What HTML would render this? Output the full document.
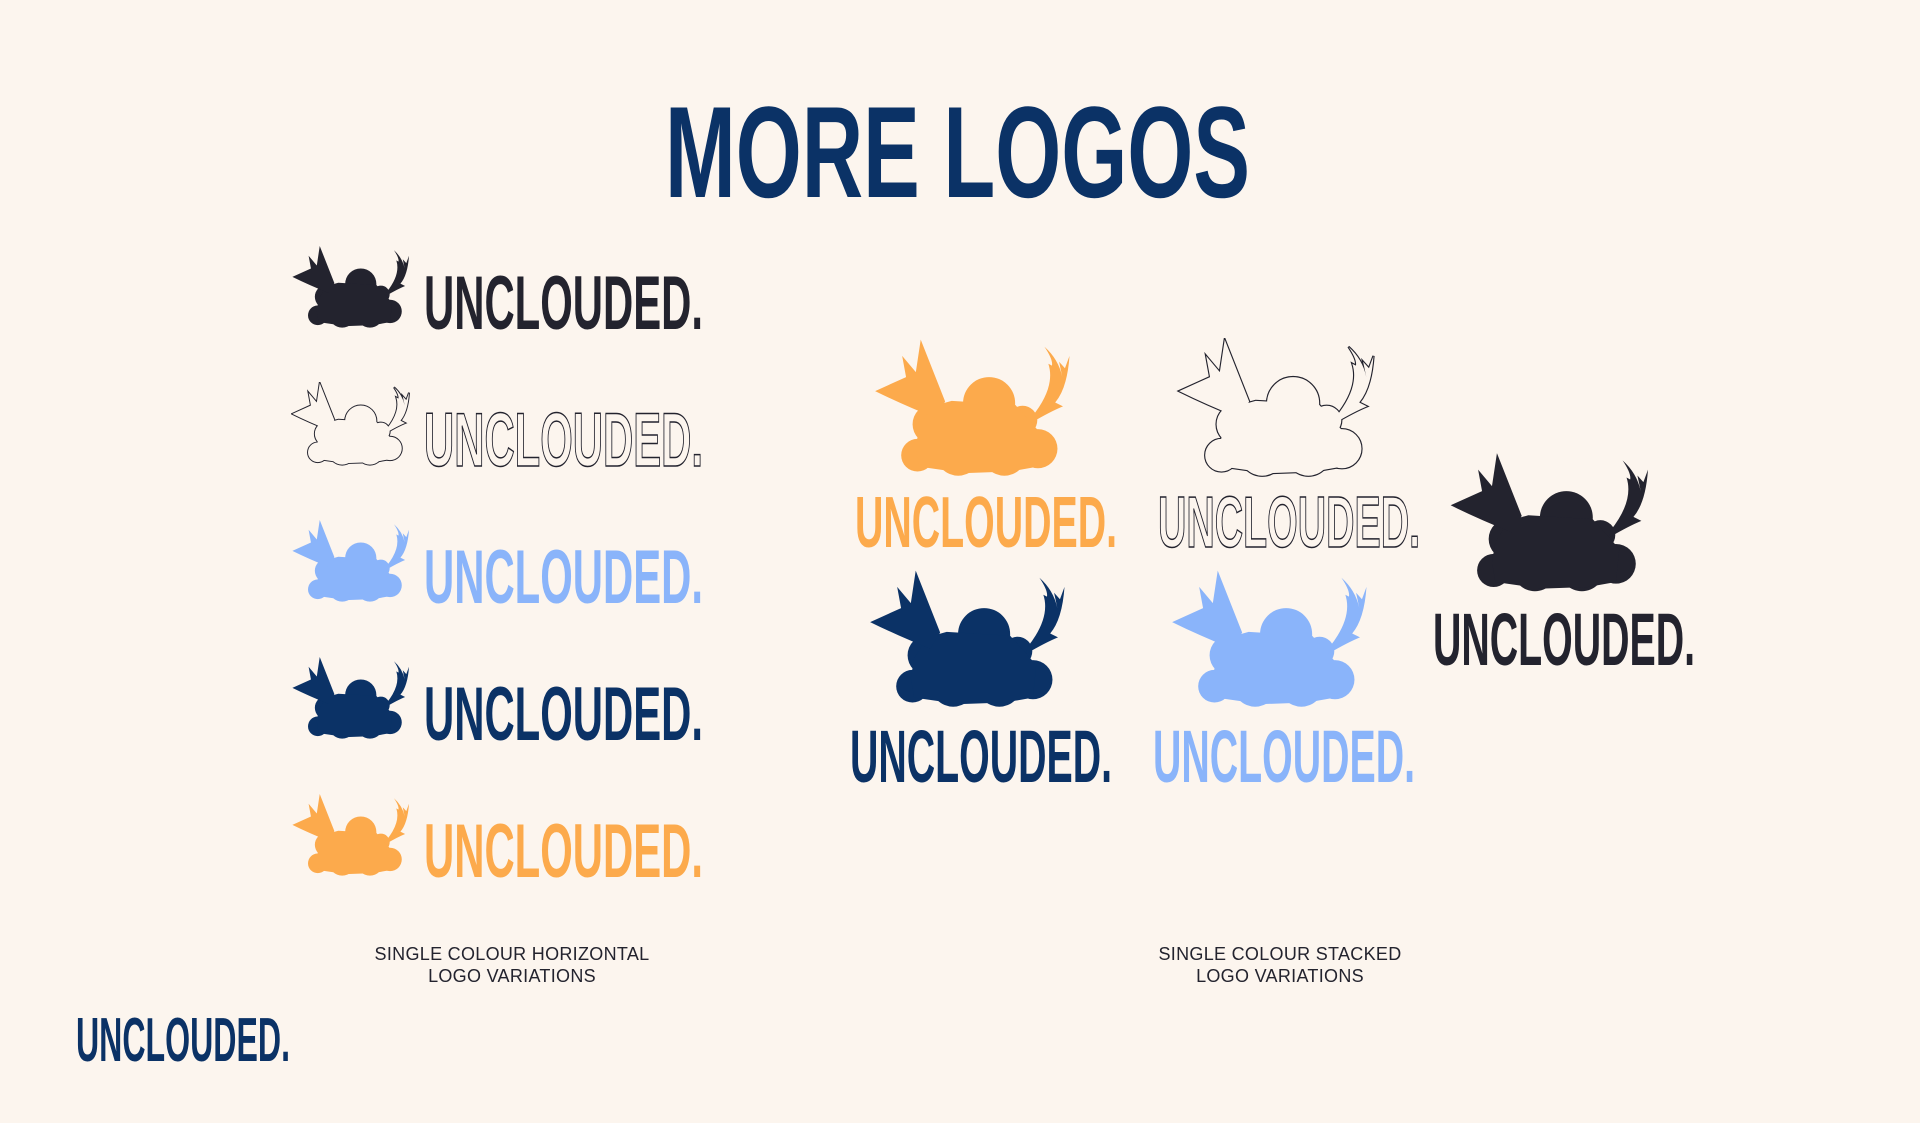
<!DOCTYPE html>
<html><head><meta charset="utf-8"><style>
html,body{margin:0;padding:0}
body{width:1920px;height:1123px;background:#fcf5ee;position:relative;overflow:hidden;font-family:"Liberation Sans",sans-serif}
svg{position:absolute;overflow:visible}
.cap{position:absolute;width:400px;text-align:center;font-size:18px;line-height:22px;color:#23232e;letter-spacing:.3px}
</style></head><body>
<svg width="0" height="0" style="position:absolute">
<defs>
<symbol id="m" viewBox="60 45 605 430">
<circle cx="415" cy="245" r="80"/><circle cx="518" cy="298" r="45"/><circle cx="565" cy="385" r="60"/>
<circle cx="195" cy="405" r="50"/><circle cx="242" cy="310" r="62"/>
<circle cx="320" cy="400" r="68"/><circle cx="462" cy="400" r="68"/>
<polygon points="240,255 300,238 495,250 540,300 575,340 565,440 480,455 340,460 200,440 190,380 200,320"/>
<path d="M65,208 L160,165 L148,100 L190,150 L205,50 L280,240 L250,290 Q150,250 65,208 Z"/>
<path d="M545,305 Q605,270 642,255 L618,243 Q655,200 662,100 L648,138 L630,118 L640,165 Q628,110 585,72 Q612,112 608,130 L597,124 Q620,195 548,285 Z"/>
</symbol>
</defs>
</svg>

<svg style="left:665px;top:95px" width="585" height="105"><text x="0" y="102" font-size="130" font-weight="bold" fill="#0b3266" textLength="585" lengthAdjust="spacingAndGlyphs">MORE LOGOS</text></svg>

<svg style="left:291px;top:245px" width="119" height="84" fill="#23232e"><use href="#m"/></svg>
<svg style="left:424px;top:272px" width="279" height="59"><text x="0" y="57" font-size="76" font-weight="bold" fill="#23232e" textLength="279" lengthAdjust="spacingAndGlyphs">UNCLOUDED.</text></svg>

<svg style="left:291px;top:382px" width="119" height="84" fill="none" stroke="#23232e" stroke-width="10"><use href="#m"/></svg>
<svg style="left:291px;top:382px" width="119" height="84" fill="#fcf5ee"><use href="#m"/></svg>
<svg style="left:424px;top:409px" width="279" height="59"><text x="0" y="57" font-size="76" font-weight="bold" fill="none" stroke="#23232e" stroke-width="1.5" textLength="279" lengthAdjust="spacingAndGlyphs">UNCLOUDED.</text></svg>

<svg style="left:291px;top:519px" width="119" height="84" fill="#8ab4fa"><use href="#m"/></svg>
<svg style="left:424px;top:546px" width="279" height="59"><text x="0" y="57" font-size="76" font-weight="bold" fill="#8ab4fa" textLength="279" lengthAdjust="spacingAndGlyphs">UNCLOUDED.</text></svg>

<svg style="left:291px;top:656px" width="119" height="84" fill="#0b3266"><use href="#m"/></svg>
<svg style="left:424px;top:683px" width="279" height="59"><text x="0" y="57" font-size="76" font-weight="bold" fill="#0b3266" textLength="279" lengthAdjust="spacingAndGlyphs">UNCLOUDED.</text></svg>

<svg style="left:291px;top:793px" width="119" height="84" fill="#fcaa4c"><use href="#m"/></svg>
<svg style="left:424px;top:820px" width="279" height="59"><text x="0" y="57" font-size="76" font-weight="bold" fill="#fcaa4c" textLength="279" lengthAdjust="spacingAndGlyphs">UNCLOUDED.</text></svg>

<svg style="left:872px;top:338px" width="200" height="140" fill="#fcaa4c"><use href="#m"/></svg>
<svg style="left:855px;top:492px" width="262" height="57"><text x="0" y="55" font-size="72" font-weight="bold" fill="#fcaa4c" textLength="262" lengthAdjust="spacingAndGlyphs">UNCLOUDED.</text></svg>

<svg style="left:1176px;top:338px" width="200" height="140" fill="none" stroke="#23232e" stroke-width="7"><use href="#m"/></svg>
<svg style="left:1176px;top:338px" width="200" height="140" fill="#fcf5ee"><use href="#m"/></svg>
<svg style="left:1158px;top:492px" width="262" height="57"><text x="0" y="55" font-size="72" font-weight="bold" fill="none" stroke="#23232e" stroke-width="1.5" textLength="262" lengthAdjust="spacingAndGlyphs">UNCLOUDED.</text></svg>

<svg style="left:867px;top:569px" width="200" height="140" fill="#0b3266"><use href="#m"/></svg>
<svg style="left:850px;top:725px" width="262" height="59"><text x="0" y="57" font-size="74" font-weight="bold" fill="#0b3266" textLength="262" lengthAdjust="spacingAndGlyphs">UNCLOUDED.</text></svg>

<svg style="left:1169px;top:569px" width="200" height="140" fill="#8ab4fa"><use href="#m"/></svg>
<svg style="left:1153px;top:725px" width="262" height="59"><text x="0" y="57" font-size="74" font-weight="bold" fill="#8ab4fa" textLength="262" lengthAdjust="spacingAndGlyphs">UNCLOUDED.</text></svg>

<svg style="left:1449px;top:451px" width="200" height="143" fill="#23232e"><use href="#m"/></svg>
<svg style="left:1433px;top:608px" width="262" height="59"><text x="0" y="57" font-size="74" font-weight="bold" fill="#23232e" textLength="262" lengthAdjust="spacingAndGlyphs">UNCLOUDED.</text></svg>

<div class="cap" style="left:312px;top:943px">SINGLE COLOUR HORIZONTAL<br>LOGO VARIATIONS</div>
<div class="cap" style="left:1080px;top:943px">SINGLE COLOUR STACKED<br>LOGO VARIATIONS</div>

<svg style="left:76px;top:1014px" width="214" height="49"><text x="0" y="47" font-size="62" font-weight="bold" fill="#0b3266" textLength="214" lengthAdjust="spacingAndGlyphs">UNCLOUDED.</text></svg>
</body></html>
